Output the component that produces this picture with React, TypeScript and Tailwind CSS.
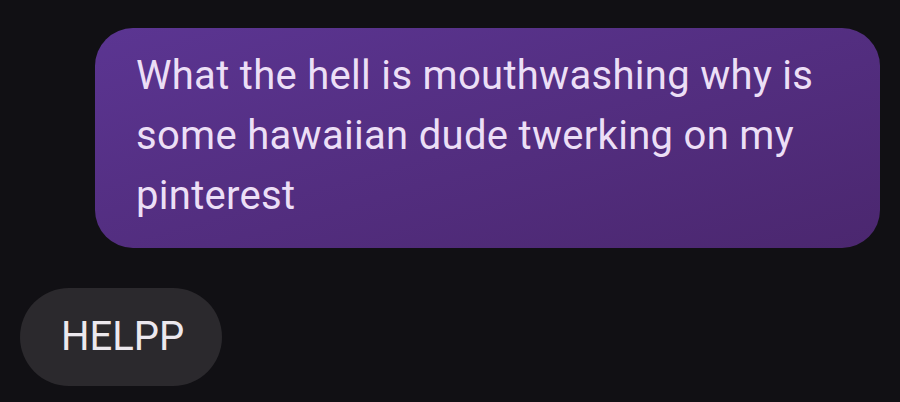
export default function App() {
  return (
    <div
      className="w-[900px] h-[402px] bg-[#111014] overflow-hidden flex flex-col"
      style={{ fontFamily: "Roboto, 'Noto Sans', sans-serif" }}
    >
      <div className="flex justify-end pt-[28px] pr-[20px]">
        <div className="w-[785px] rounded-[38px] bg-gradient-to-br from-[#5b3592] to-[#4b276f] pl-[41px] pr-[30px] pt-[18px] pb-[22px] text-[40px] leading-[60px] tracking-[0.3px] text-[#ecdff6]">
          What the hell is mouthwashing why is some hawaiian dude twerking on my pinterest
        </div>
      </div>
      <div className="flex pl-[20px] pt-[40px]">
        <div className="h-[98px] rounded-full bg-[#2b292d] pl-[41px] pr-[38px] flex items-center text-[40px] text-[#ece8ee]">
          HELPP
        </div>
      </div>
    </div>
  );
}
